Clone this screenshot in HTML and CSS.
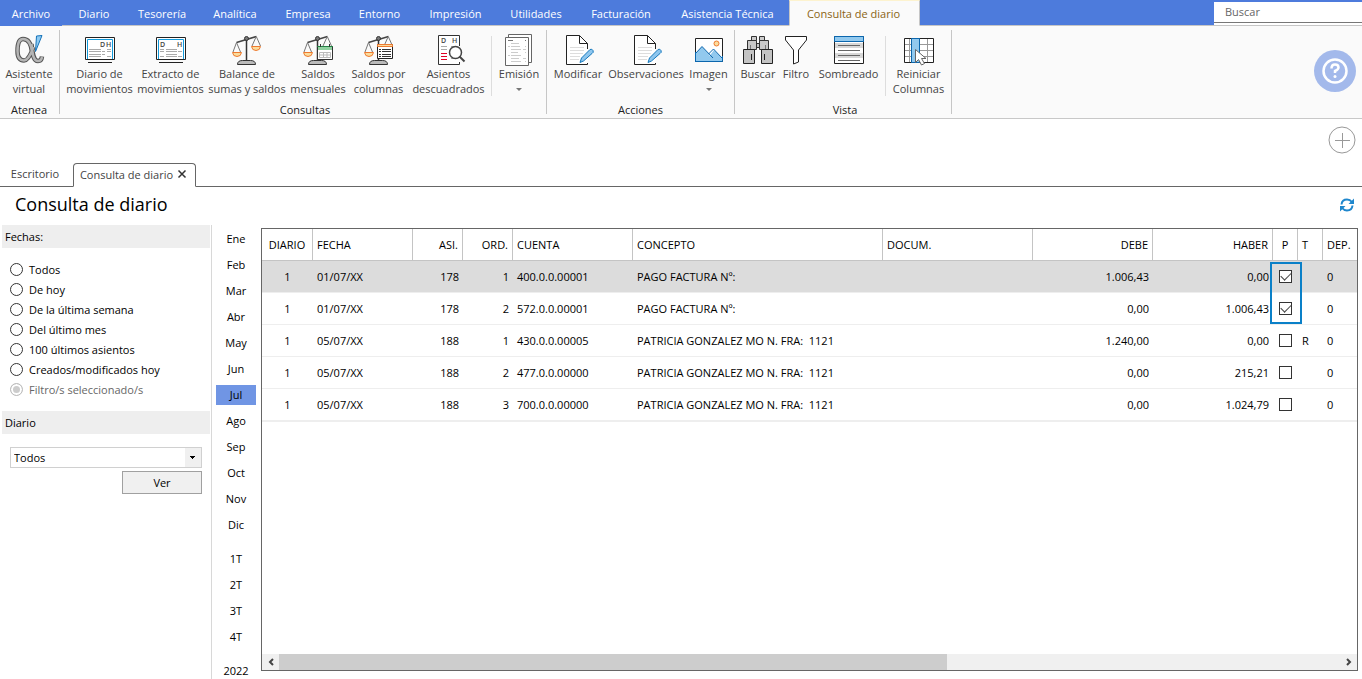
FILE: index.html
```html
<!DOCTYPE html>
<html lang="es">
<head>
<meta charset="utf-8">
<title>Consulta de diario</title>
<link rel="stylesheet" href="styles.css">
</head>
<body>
<svg class="defs" aria-hidden="true">
  <symbol id="scale" viewBox="0 0 32 32">
    <path d="M5.500 8.500 25.500 2.500" stroke="#444" stroke-width="1.500"/>
    <path d="M15.500 4v23" stroke="#333" stroke-width="1.500"/>
    <path d="M5.500 8.500 2 18M5.500 8.500 9.500 18M25 3 21 12M25.500 3 29.500 12" stroke="#777" fill="none"/>
    <path d="M1.500 18.500h9q-.5 4-4.500 4t-4.500-4zM20.500 12.500h9q-.5 4-4.500 4t-4.500-4z" fill="#fbdc9c" stroke="#ee7a30"/>
    <circle cx="15.500" cy="4.500" r="2" fill="#777" stroke="#333"/>
    <path d="M6.500 30.500q0-4 5-4h8q5 0 5 4z" fill="#bbb" stroke="#333"/>
  </symbol>
  <symbol id="page-edit" viewBox="0 0 32 32">
    <path d="M25.500 15V9.500l-8-8h-13v29h21V29" fill="#fff" stroke="#222"/>
    <path d="M17.500 1.500v8h8" fill="none" stroke="#222"/>
    <path d="M8 13.500h14M8 16.500h14M8 19.500h13M8 22.500h10M8 25.500h9" stroke="#ddd"/>
    <path d="m18 28.500 1.500-4.500 8.500-8.500q2-1 3 1t-1 3L21.500 27z" fill="#8ec6ee" stroke="#1679bd"/>
  </symbol>
  <symbol id="monitor" viewBox="0 0 32 32">
    <path d="M1.500 3.500h29v22h-29z" fill="#fff" stroke="#222"/>
    <path d="M3.500 25V5.500h25V25" fill="none" stroke="#129bdc"/>
    <path d="M4 28.500h24" stroke="#222"/>
  </symbol>
</svg>

<nav class="menu">
  <button class="menu-item w62">Archivo</button>
  <button class="menu-item w64">Diario</button>
  <button class="menu-item w72">Tesorería</button>
  <button class="menu-item w74">Analítica</button>
  <button class="menu-item w72">Empresa</button>
  <button class="menu-item w71">Entorno</button>
  <button class="menu-item w81">Impresión</button>
  <button class="menu-item w80">Utilidades</button>
  <button class="menu-item w90">Facturación</button>
  <button class="menu-item w123">Asistencia Técnica</button>
  <button class="menu-item menu-active w131">Consulta de diario</button>
  <div class="search"><input type="text" placeholder="Buscar" aria-label="Buscar"></div>
</nav>

<header class="ribbon">
  <section class="group">
    <div class="tools">
      <button class="tool w56">
        <svg class="icon" viewBox="0 0 32 32">
          <path d="M19 18C18 8 14 5 10 5S4.500 10 4.500 17 7 26.500 11 26.500 18 20 20.500 13M18.500 10C19.500 19 20 27 25 27q3.500 0 4-4.500" fill="none" stroke="#555" stroke-width="4.500"/>
          <path d="M19 18C18 8 14 5 10 5S4.500 10 4.500 17 7 26.500 11 26.500 18 20 20.500 13M18.500 10C19.500 19 20 27 25 27q3.500 0 4-4" fill="none" stroke="#b5b5b5" stroke-width="2.500"/>
          <path d="M23.500 2 29 1.500 22.500 17.500z" fill="#8ecaf2" stroke="#1673b9"/>
        </svg>
        <span>Asistente<br>virtual</span>
      </button>
    </div>
    <h2>Atenea</h2>
  </section>

  <section class="group group-pad">
    <div class="tools">
      <button class="tool w71">
        <svg class="icon" viewBox="0 0 32 32">
          <use href="#monitor"/>
          <text class="mono" x="16" y="13">D</text><text class="mono" x="22" y="13">H</text>
          <path d="M5 15.500h12M5 17.500h12M5 20.500h12M5 22.500h12M18 17.500h3M23 17.500h4M18 20.500h3M23 15.500h4M23 22.500h4" stroke="#aaa"/>
        </svg>
        <span>Diario de<br>movimientos</span>
      </button>
      <button class="tool w71">
        <svg class="icon" viewBox="0 0 32 32">
          <use href="#monitor"/>
          <text class="mono" x="5" y="13">D</text><text class="mono" x="22" y="13">H</text>
          <path d="M5 15.500h4M5 17.500h4M5 22.500h4M11 15.500h11M11 17.500h11M11 20.500h11M11 22.500h11M23 17.500h4M23 22.500h4" stroke="#aaa"/>
        </svg>
        <span>Extracto de<br>movimientos</span>
      </button>
      <button class="tool w82">
        <svg class="icon"><use href="#scale"/></svg>
        <span>Balance de<br>sumas y saldos</span>
      </button>
      <button class="tool w60">
        <svg class="icon" viewBox="0 0 32 32">
          <use href="#scale"/>
          <path d="M15.500 12.500h15v13h-15z" fill="#fff" stroke="#333"/>
          <path d="M16 13h14v3H16z" fill="#8fd09f"/><path d="M15 12.500h16" stroke="#238044"/>
          <path d="M18.500 10v3M27.500 10v3" stroke="#333"/>
          <path d="M17.500 18.500h11v5h-11zM17.500 21h11M21.500 18.500v5M25 18.500v5" fill="none" stroke="#bbb"/>
        </svg>
        <span>Saldos<br>mensuales</span>
      </button>
      <button class="tool w61">
        <svg class="icon" viewBox="0 0 32 32">
          <use href="#scale"/>
          <path d="M14.500 10.500h15v14h-15z" fill="#fff" stroke="#222"/>
          <path d="M14.500 10.500h15v2h-15z" fill="#fbdc9c" stroke="#ee7a30"/>
          <path d="M16 15.500h12M16 17.500h12M16 20.500h12M16 22.500h12" stroke="#333" stroke-dasharray="2 1 10 0"/>
        </svg>
        <span>Saldos por<br>columnas</span>
      </button>
      <button class="tool w79">
        <svg class="icon" viewBox="0 0 32 32">
          <path d="M26.500 12V1.500h-21v29h21V28" fill="#fff" stroke="#333"/>
          <text class="mono" x="8" y="9">D</text><text class="mono" x="19" y="9">H</text>
          <path d="M8 12.500h6M8 15.500h6M18 12.500h6M18 24.500h6" stroke="#aaa"/>
          <path d="M8 19.500h6M8 22.500h6M8 25.500h6" stroke="#e00024"/>
          <circle cx="22.500" cy="18.500" r="6" fill="#fff" stroke="#444" stroke-width="1.500"/>
          <path d="m26.500 22.500 5 5" stroke="#444" stroke-width="2"/>
        </svg>
        <span>Asientos<br>descuadrados</span>
      </button>
      <i class="divider"></i>
      <button class="tool w54">
        <svg class="icon" viewBox="0 0 32 32">
          <path d="M5.500.5h23v28h-23z" fill="#fff" stroke="#666"/>
          <path d="M2.500 3.500h23v28h-23z" fill="#fff" stroke="#666"/>
          <path d="M5 6.500h5M22 6.500h1" stroke="#777"/>
          <path d="M8 9.500h8M5 12.500h2M8 12.500h9M22 12.500h1M8 15.500h10M20 15.500h3M8 18.500h7M22 18.500h1M5 21.500h2M8 21.500h10M8 24.500h8M20 24.500h3M8 27.500h10M22 27.500h1" stroke="#ccc"/>
        </svg>
        <span>Emisión</span><i class="arrow"></i>
      </button>
    </div>
    <h2>Consultas</h2>
  </section>

  <section class="group group-pad">
    <div class="tools">
      <button class="tool w54"><svg class="icon"><use href="#page-edit"/></svg><span>Modificar</span></button>
      <button class="tool w82"><svg class="icon"><use href="#page-edit"/></svg><span>Observaciones</span></button>
      <button class="tool w43">
        <svg class="icon" viewBox="0 0 32 32">
          <path d="M2.500 4.500h27v23h-27z" fill="#fff" stroke="#222"/>
          <path d="m3 19 6-6.500 6 6.500 5 8H3z" fill="#92c9ee"/>
          <path d="m13 27 8-11 8 8v3z" fill="#92c9ee"/>
          <path d="m3 19 6-6.500L20 24M15.500 20l5-5L29 24" fill="none" stroke="#0b66ad"/>
          <path d="M2.500 28V18M29.500 22v5.500h-27" fill="none" stroke="#0b66ad"/>
          <circle cx="23.500" cy="9.500" r="2.500" fill="#fbdc9c" stroke="#ee7a30"/>
        </svg>
        <span>Imagen</span><i class="arrow"></i>
      </button>
    </div>
    <h2>Acciones</h2>
  </section>

  <section class="group group-pad">
    <div class="tools">
      <button class="tool w38">
        <svg class="icon" viewBox="0 0 32 32">
          <path d="M9.500 2.500h5v4h-5zM17.500 2.500h5v4h-5z" fill="#ccc" stroke="#333"/>
          <path d="M5.500 6.500h9v9h-9zM17.500 6.500h9v9h-9zM14.500 9.500h3v4h-3z" fill="#c8c8c8" stroke="#333"/>
          <path d="M1.500 15.500h11v14h-11zM19.500 15.500h11v14h-11z" fill="#c3c3c3" stroke="#222"/>
          <path d="M9.500 20v6M22.500 20v6" stroke="#222"/>
          <path d="M8.500 11v4M23.500 11v4" stroke="#777"/>
        </svg>
        <span>Buscar</span>
      </button>
      <button class="tool w38">
        <svg class="icon" viewBox="0 0 32 32"><path d="M5.500 2.500h21V6L18.500 16v12l-5 2V16L5.500 6z" fill="#fff" stroke="#222"/></svg>
        <span>Filtro</span>
      </button>
      <button class="tool w67">
        <svg class="icon" viewBox="0 0 32 32">
          <path d="M1.500 2.500h29v27h-29z" fill="#fff" stroke="#222"/>
          <path d="M2 9h28v5H2zM2 19h28v5H2z" fill="#d8d8d8"/>
          <path d="M1.500 2.500h29v5h-29z" fill="#92c9ee" stroke="#0b66ad"/>
          <path d="M5 11.500h22M5 16.500h22M5 21.500h22M5 26.500h22" stroke="#666"/>
        </svg>
        <span>Sombreado</span>
      </button>
      <i class="divider"></i>
      <button class="tool w65">
        <svg class="icon" viewBox="0 0 32 32">
          <path d="M1.500 4.500h29v24h-29z" fill="#fff" stroke="#222"/>
          <path d="M2 10.500h28M2 16.500h28M2 22.500h28M6.500 5v23M24.500 5v23" stroke="#999"/>
          <path d="M8.500 4.500h8v24h-8z" fill="#92c9ee" stroke="#0b66ad"/>
          <path d="M12.500 15.500v13l3-3 3 5.500 3-1.500-3-5h4.500z" fill="#fff" stroke="#666"/>
        </svg>
        <span>Reiniciar<br>Columnas</span>
      </button>
    </div>
    <h2>Vista</h2>
  </section>
  <button class="help" aria-label="Ayuda">
    <svg viewBox="0 0 42 42" width="42" height="42">
      <circle cx="21" cy="21" r="21" fill="#a3b9eb"/>
      <circle cx="21" cy="21" r="11.500" fill="none" stroke="#fff" stroke-width="2.500"/>
      <path d="M17.500 18.500q0-4 3.500-4t3.500 3q0 2-3.500 3.500V23" fill="none" stroke="#fff" stroke-width="2.500"/>
      <circle cx="21" cy="26.500" r="1.500" fill="#fff"/>
    </svg>
  </button>
</header>

<div class="add-row">
  <button aria-label="Añadir">
    <svg viewBox="0 0 28 28" width="28" height="28"><circle cx="14" cy="14" r="13" fill="none" stroke="#999"/><path d="M14.500 7v15M7 14.500h15" stroke="#999"/></svg>
  </button>
</div>

<div class="tabs">
  <button class="tab">Escritorio</button>
  <button class="tab tab-active">Consulta de diario
    <svg viewBox="0 0 10 10" width="10" height="10"><path d="m1.500 1.500 7 7M8.500 1.500l-7 7" stroke="#333" stroke-width="1.500"/></svg>
  </button>
</div>

<div class="heading">
  <h1>Consulta de diario</h1>
  <button aria-label="Actualizar">
    <svg viewBox="0 0 16 16" width="16" height="16"><path d="M2.500 7.500q.5-5 5.500-5 3 0 5 2.500M13.500 8.500q-.5 5-5.500 5-3 0-5-2.500" fill="none" stroke="#1f87cd" stroke-width="2"/><path d="M15 1.500v5.500h-5.500zM1 14.500V9h5.500z" fill="#1f87cd"/></svg>
  </button>
</div>

<main class="content">
  <aside class="filters">
    <h3>Fechas:</h3>
    <div class="options">
      <label><input type="radio" name="fecha">Todos</label>
      <label><input type="radio" name="fecha">De hoy</label>
      <label><input type="radio" name="fecha">De la última semana</label>
      <label><input type="radio" name="fecha">Del último mes</label>
      <label><input type="radio" name="fecha">100 últimos asientos</label>
      <label><input type="radio" name="fecha">Creados/modificados hoy</label>
      <label class="disabled"><input type="radio" name="fecha" checked disabled>Filtro/s seleccionado/s</label>
    </div>
    <h3 id="diario-title">Diario</h3>
    <div class="journal">
      <select aria-labelledby="diario-title"><option>Todos</option></select>
      <button>Ver</button>
    </div>
  </aside>

  <nav class="periods">
    <button>Ene</button><button>Feb</button><button>Mar</button><button>Abr</button>
    <button>May</button><button>Jun</button><button class="selected">Jul</button><button>Ago</button>
    <button>Sep</button><button>Oct</button><button>Nov</button><button>Dic</button>
    <button class="spaced">1T</button><button>2T</button><button>3T</button><button>4T</button>
    <button class="spaced">2022</button>
  </nav>

  <div class="grid">
    <div class="grid-body">
    <table>
      <colgroup>
        <col class="c51"><col class="c100"><col class="c50"><col class="c50"><col class="c120"><col class="c250">
        <col class="c150"><col class="c120"><col class="c120"><col class="c25"><col class="c25"><col>
      </colgroup>
      <thead>
        <tr><th class="mid">DIARIO</th><th>FECHA</th><th class="num">ASI.</th><th class="num">ORD.</th><th>CUENTA</th><th>CONCEPTO</th><th>DOCUM.</th><th class="num">DEBE</th><th class="num">HABER</th><th class="mid">P</th><th>T</th><th>DEP.</th></tr>
      </thead>
      <tbody>
        <tr class="current"><td class="mid">1</td><td>01/07/XX</td><td class="num">178</td><td class="num">1</td><td>400.0.0.00001</td><td>PAGO FACTURA Nº:</td><td></td><td class="num">1.006,43</td><td class="num">0,00</td><td class="check"><i class="marker"></i><input type="checkbox" aria-label="Punteado" checked></td><td></td><td>0</td></tr>
        <tr><td class="mid">1</td><td>01/07/XX</td><td class="num">178</td><td class="num">2</td><td>572.0.0.00001</td><td>PAGO FACTURA Nº:</td><td></td><td class="num">0,00</td><td class="num">1.006,43</td><td class="check"><input type="checkbox" aria-label="Punteado" checked></td><td></td><td>0</td></tr>
        <tr><td class="mid">1</td><td>05/07/XX</td><td class="num">188</td><td class="num">1</td><td>430.0.0.00005</td><td>PATRICIA GONZALEZ MO N. FRA:&nbsp; 1121</td><td></td><td class="num">1.240,00</td><td class="num">0,00</td><td class="check"><input type="checkbox" aria-label="Punteado"></td><td>R</td><td>0</td></tr>
        <tr><td class="mid">1</td><td>05/07/XX</td><td class="num">188</td><td class="num">2</td><td>477.0.0.00000</td><td>PATRICIA GONZALEZ MO N. FRA:&nbsp; 1121</td><td></td><td class="num">0,00</td><td class="num">215,21</td><td class="check"><input type="checkbox" aria-label="Punteado"></td><td></td><td>0</td></tr>
        <tr><td class="mid">1</td><td>05/07/XX</td><td class="num">188</td><td class="num">3</td><td>700.0.0.00000</td><td>PATRICIA GONZALEZ MO N. FRA:&nbsp; 1121</td><td></td><td class="num">0,00</td><td class="num">1.024,79</td><td class="check"><input type="checkbox" aria-label="Punteado"></td><td></td><td>0</td></tr>
      </tbody>
    </table>
    </div>
    <div class="scrollbar">
      <button aria-label="Desplazar a la izquierda"><svg viewBox="0 0 8 8" width="8" height="8"><path d="M6 1 3 4l3 3" fill="none" stroke="#444" stroke-width="2"/></svg></button>
      <div class="track"><div class="thumb"></div></div>
      <button aria-label="Desplazar a la derecha"><svg viewBox="0 0 8 8" width="8" height="8"><path d="m2 1 3 3-3 3" fill="none" stroke="#444" stroke-width="2"/></svg></button>
    </div>
  </div>
</main>
</body>
</html>
```

FILE: styles.css
```css
* { box-sizing: border-box; }
body {
  margin: 0;
  height: 100vh;
  display: flex;
  flex-direction: column;
  overflow: hidden;
  background: #fff;
  color: #000;
  font: 11px/15px "Open Sans", "Noto Sans", sans-serif;
}
button, input, select { font: inherit; color: inherit; }
button { border: 0; padding: 0; background: none; }
h1, h2, h3 { margin: 0; font-weight: 400; }
svg { display: block; }
.defs { position: absolute; width: 0; height: 0; }

.w38 { width: 38px; }
.w43 { width: 43px; }
.w54 { width: 54px; }
.w56 { width: 56px; }
.w60 { width: 60px; }
.w61 { width: 61px; }
.w62 { width: 62px; }
.w64 { width: 64px; }
.w65 { width: 65px; }
.w67 { width: 67px; }
.w71 { width: 71px; }
.w72 { width: 72px; }
.w74 { width: 74px; }
.w79 { width: 79px; }
.w80 { width: 80px; }
.w81 { width: 81px; }
.w82 { width: 82px; }
.w90 { width: 90px; }
.w123 { width: 123px; }
.w131 { width: 131px; }

/* Menu bar */
.menu { display: flex; height: 26px; flex: none; background: #4d7bdc; }
.menu-item { flex: none; padding-top: 2px; color: #fff; white-space: nowrap; border-bottom: 1px solid #c6c6c6; }
.menu-item:first-child { border-color: #4d7bdc; }
.menu-active { padding: 0 2px 0 0; background: #fafafa; color: #8a6414; border: 1px solid #c6c6c6; border-bottom-color: #fafafa; border-top-color: #fdf3cf; }
.search { flex: 1; display: flex; justify-content: flex-end; padding-top: 2px; border-bottom: 1px solid #c6c6c6; }
.search input {
  width: 148px;
  height: 21px;
  padding: 0 11px 2px;
  border: 0;
  border-bottom: 1px solid #777;
  box-shadow: 0 2px #fff;
  outline: 0;
}
.search input::placeholder { color: #666; opacity: 1; }

/* Ribbon */
.ribbon { display: flex; flex: none; height: 93px; padding-top: 4px; background: #fafafa; border-bottom: 1px solid #c8c8c8; color: #444; }
.group { flex: none; height: 84px; padding: 4px 0 0; border-right: 1px solid #c6c6c6; }
.group:first-child { padding-left: 1px; padding-right: 2px; }
.group:nth-child(3) { padding-right: 4px; }
.group-pad { padding-left: 4px; }
.tools { display: flex; height: 68px; }
.tool { display: flex; flex-direction: column; align-items: center; flex: none; white-space: nowrap; }
.icon { width: 32px; height: 32px; flex: none; overflow: visible; }
.mono { font: 600 7px "Open Sans", sans-serif; fill: #444; }
.divider { width: 1px; height: 60px; margin-top: 2px; margin-left: 3px; background: #ddd; }
.arrow { margin-top: 7px; border: 3px solid transparent; border-top-color: #777; }
.group h2 { font-size: 11px; line-height: 15px; text-align: center; color: #222; }
.help { margin: 20px 6px 0 auto; align-self: flex-start; }

/* Document tabs */
.add-row { display: flex; justify-content: flex-end; align-items: flex-start; flex: none; height: 44px; padding: 7px 6px 0; }
.tabs { display: flex; flex: none; height: 24px; border-bottom: 1px solid #666; color: #444; }
.tab { width: 73px; padding: 0 3px 2px 0; }
.tab-active {
  display: flex;
  align-items: center;
  justify-content: center;
  gap: 4px;
  width: 123px;
  height: 24px;
  padding: 0 2px 2px 0;
  white-space: nowrap;
  background: #fff;
  border: 1px solid #666;
  border-bottom-color: #fff;
  border-radius: 4px 4px 0 0;
}
.heading { display: flex; align-items: center; justify-content: space-between; flex: none; height: 38px; padding: 0 7px 2px 15px; }
.heading h1 { padding-bottom: 2px; font-size: 18px; line-height: 24px; }

/* Filters */
.content { display: flex; flex: 1; min-height: 0; }
.filters { flex: none; width: 212px; padding: 0 1px 0 2px; border-right: 1px solid #d8d8d8; }
.filters h3 { padding: 4px 3px; background: #eee; font-size: 11px; line-height: 15px; }
.options { padding: 11px 8px 12px; }
.options label { display: flex; align-items: center; gap: 6px; height: 20px; }
.options input { appearance: none; width: 13px; height: 13px; margin: 0; border: 1px solid #333; border-radius: 50%; }
.options .disabled { color: #666; }
.options input:disabled { border-color: #bbb; background: #ccc; box-shadow: inset 0 0 0 2px #fff; }
.journal { display: flex; flex-direction: column; align-items: flex-end; gap: 3px; padding: 13px 8px 0; }
.journal select {
  appearance: none;
  width: 100%;
  height: 21px;
  padding: 0 3px;
  border: 1px solid #d0d0d0;
  border-radius: 0;
  background:
    linear-gradient(#000, #000) right 6px top 8px / 5px 1px no-repeat,
    linear-gradient(#000, #000) right 7px top 9px / 3px 1px no-repeat,
    linear-gradient(#000, #000) right 8px top 10px / 1px 1px no-repeat,
    linear-gradient(#f0f0f0, #f0f0f0) right / 16px 100% no-repeat, #fff;
}
.journal button { width: 80px; height: 23px; border: 1px solid #a0a0a0; background: #f0f0f0; }

/* Periods */
.periods { display: flex; flex-direction: column; gap: 6px; flex: none; width: 49px; margin-bottom: 4px; padding: 4px 5px 0 4px; overflow: hidden; }
.periods button { flex: none; height: 20px; padding-bottom: 2px; }
.periods .spaced { margin-top: 8px; }
.periods .selected { background: #7095e4; }

/* Entries */
.grid { display: flex; flex-direction: column; flex: 1; min-width: 0; margin: 3px 4px 8px 0; border: 1px solid #666; }
.grid-body { flex: 1; min-height: 0; overflow: hidden; }
table { width: 100%; table-layout: fixed; border-collapse: separate; border-spacing: 0; border-bottom: 1px solid #eee; }
.c25 { width: 25px; }
.c50 { width: 50px; }
.c51 { width: 51px; }
.c100 { width: 100px; }
.c120 { width: 120px; }
.c150 { width: 150px; }
.c250 { width: 250px; }
th, td { height: 32px; padding: 0 4px; font-weight: 400; text-align: left; white-space: nowrap; border-bottom: 1px solid #eee; }
th { border-right: 1px solid #c4c4c4; border-bottom-color: #c4c4c4; }
th:last-child { border-right: 0; }
.num { padding-right: 4px; text-align: right; }
.mid { padding: 0; text-align: center; }
.current td { background: #dcdcdc; }
.check { position: relative; padding: 0 6px; }
.check input {
  appearance: none;
  display: block;
  width: 13px;
  height: 13px;
  margin: 0;
  border: 1px solid #333;
  background: #fff;
}
.check input:checked::after {
  content: "";
  display: block;
  width: 9px;
  height: 5px;
  margin: 1px;
  border: solid #444;
  border-width: 0 0 1px 1px;
  transform: rotate(-45deg);
}
.marker { position: absolute; top: 1px; left: -3px; width: 32px; height: 62px; border: 2px solid #0a80c8; z-index: 1; pointer-events: none; }
.scrollbar { display: flex; flex: none; height: 16px; background: #f0f0f0; }
.scrollbar button { display: flex; align-items: center; justify-content: center; width: 17px; }
.track { flex: 1; }
.thumb { width: 63%; height: 100%; background: #cdcdcd; }
```
